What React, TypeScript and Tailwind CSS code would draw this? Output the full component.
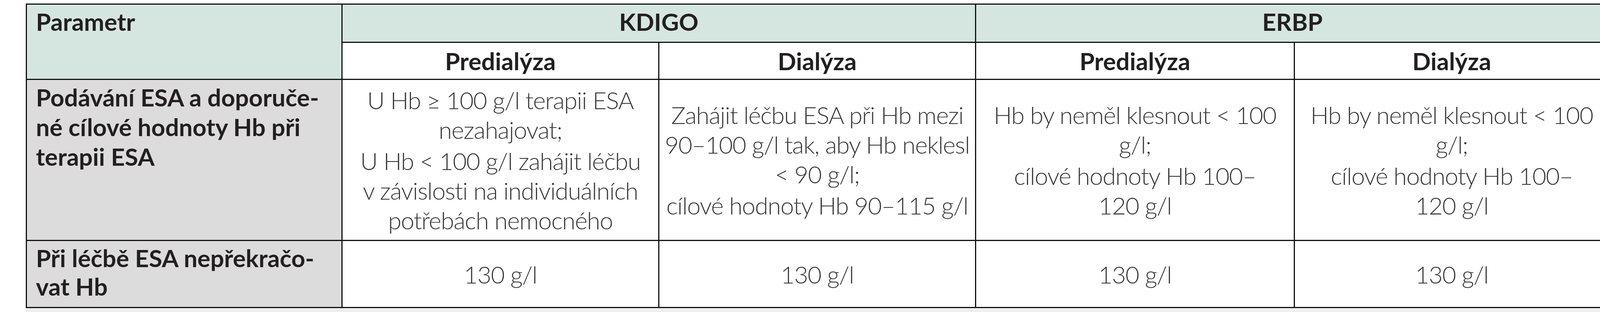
const font = "font-['Lato','Liberation_Sans',sans-serif]"

function Lines({ lines }: { lines: string[] }) {
  return (
    <>
      {lines.map((l) => (
        <span key={l} className="block whitespace-nowrap">
          {l}
        </span>
      ))}
    </>
  )
}

function Head({ children, className = '' }: { children: React.ReactNode; className?: string }) {
  return (
    <div className={`flex justify-center font-bold text-[#231f20] ${className}`}>{children}</div>
  )
}

function Body({ paras }: { paras: string[][] }) {
  return (
    <div className="flex min-w-0 flex-col items-center justify-center gap-[4px] overflow-hidden bg-white text-center font-light tracking-[-1.4px] text-[#3a3a3a]">
      {paras.map((p, i) => (
        <div key={i}>
          <Lines lines={p} />
        </div>
      ))}
    </div>
  )
}

export default function App() {
  return (
    <div className={`min-h-[800px] overflow-hidden bg-white pl-[66px] pt-[9px] ${font} text-[62px] leading-[76px]`}>
      <div className="w-[4055px]">
        <div className="grid grid-cols-[805px_808px_808px_813px_803px] grid-rows-[95px_92px_410px_169px] gap-[3px] bg-[#111] p-[3px]">
          {/* header */}
          <div className="row-span-2 bg-[#d5e6e1] pl-[23px] pt-[5px] font-bold text-[#231f20]">Parametr</div>
          <Head className="col-span-2 bg-[#d5e6e1] pt-[5px]">KDIGO</Head>
          <Head className="col-span-2 bg-[#d5e6e1] pt-[5px]">ERBP</Head>
          <Head className="items-center bg-white">Predialýza</Head>
          <Head className="items-center bg-white">Dialýza</Head>
          <Head className="items-center bg-white">Predialýza</Head>
          <Head className="items-center bg-white">Dialýza</Head>

          {/* row 1 */}
          <div className="min-w-0 overflow-hidden bg-[#dcdcdc] pl-[23px] pt-[6px] font-bold text-[#231f20]">
            <Lines lines={['Podávání ESA a doporuče-', 'né cílové hodnoty Hb při', 'terapii ESA']} />
          </div>
          <Body
            paras={[
              ['U Hb ≥ 100 g/l terapii ESA', 'nezahajovat;'],
              ['U Hb < 100 g/l zahájit léčbu', 'v závislosti na individuálních', 'potřebách nemocného'],
            ]}
          />
          <Body
            paras={[
              ['Zahájit léčbu ESA při Hb mezi', '90–100 g/l tak, aby Hb neklesl', '< 90 g/l;'],
              ['cílové hodnoty Hb 90–115 g/l'],
            ]}
          />
          <Body paras={[['Hb by neměl klesnout < 100', 'g/l;'], ['cílové hodnoty Hb 100–', '120 g/l']]} />
          <Body paras={[['Hb by neměl klesnout < 100', 'g/l;'], ['cílové hodnoty Hb 100–', '120 g/l']]} />

          {/* row 2 */}
          <div className="min-w-0 overflow-hidden bg-[#dcdcdc] pl-[23px] pt-[7px] font-bold leading-[73px] text-[#231f20]">
            <Lines lines={['Při léčbě ESA nepřekračo-', 'vat Hb']} />
          </div>
          <Body paras={[['130 g/l']]} />
          <Body paras={[['130 g/l']]} />
          <Body paras={[['130 g/l']]} />
          <Body paras={[['130 g/l']]} />
        </div>
        <div className="h-[10px] bg-[#efefef]" />
      </div>
    </div>
  )
}
